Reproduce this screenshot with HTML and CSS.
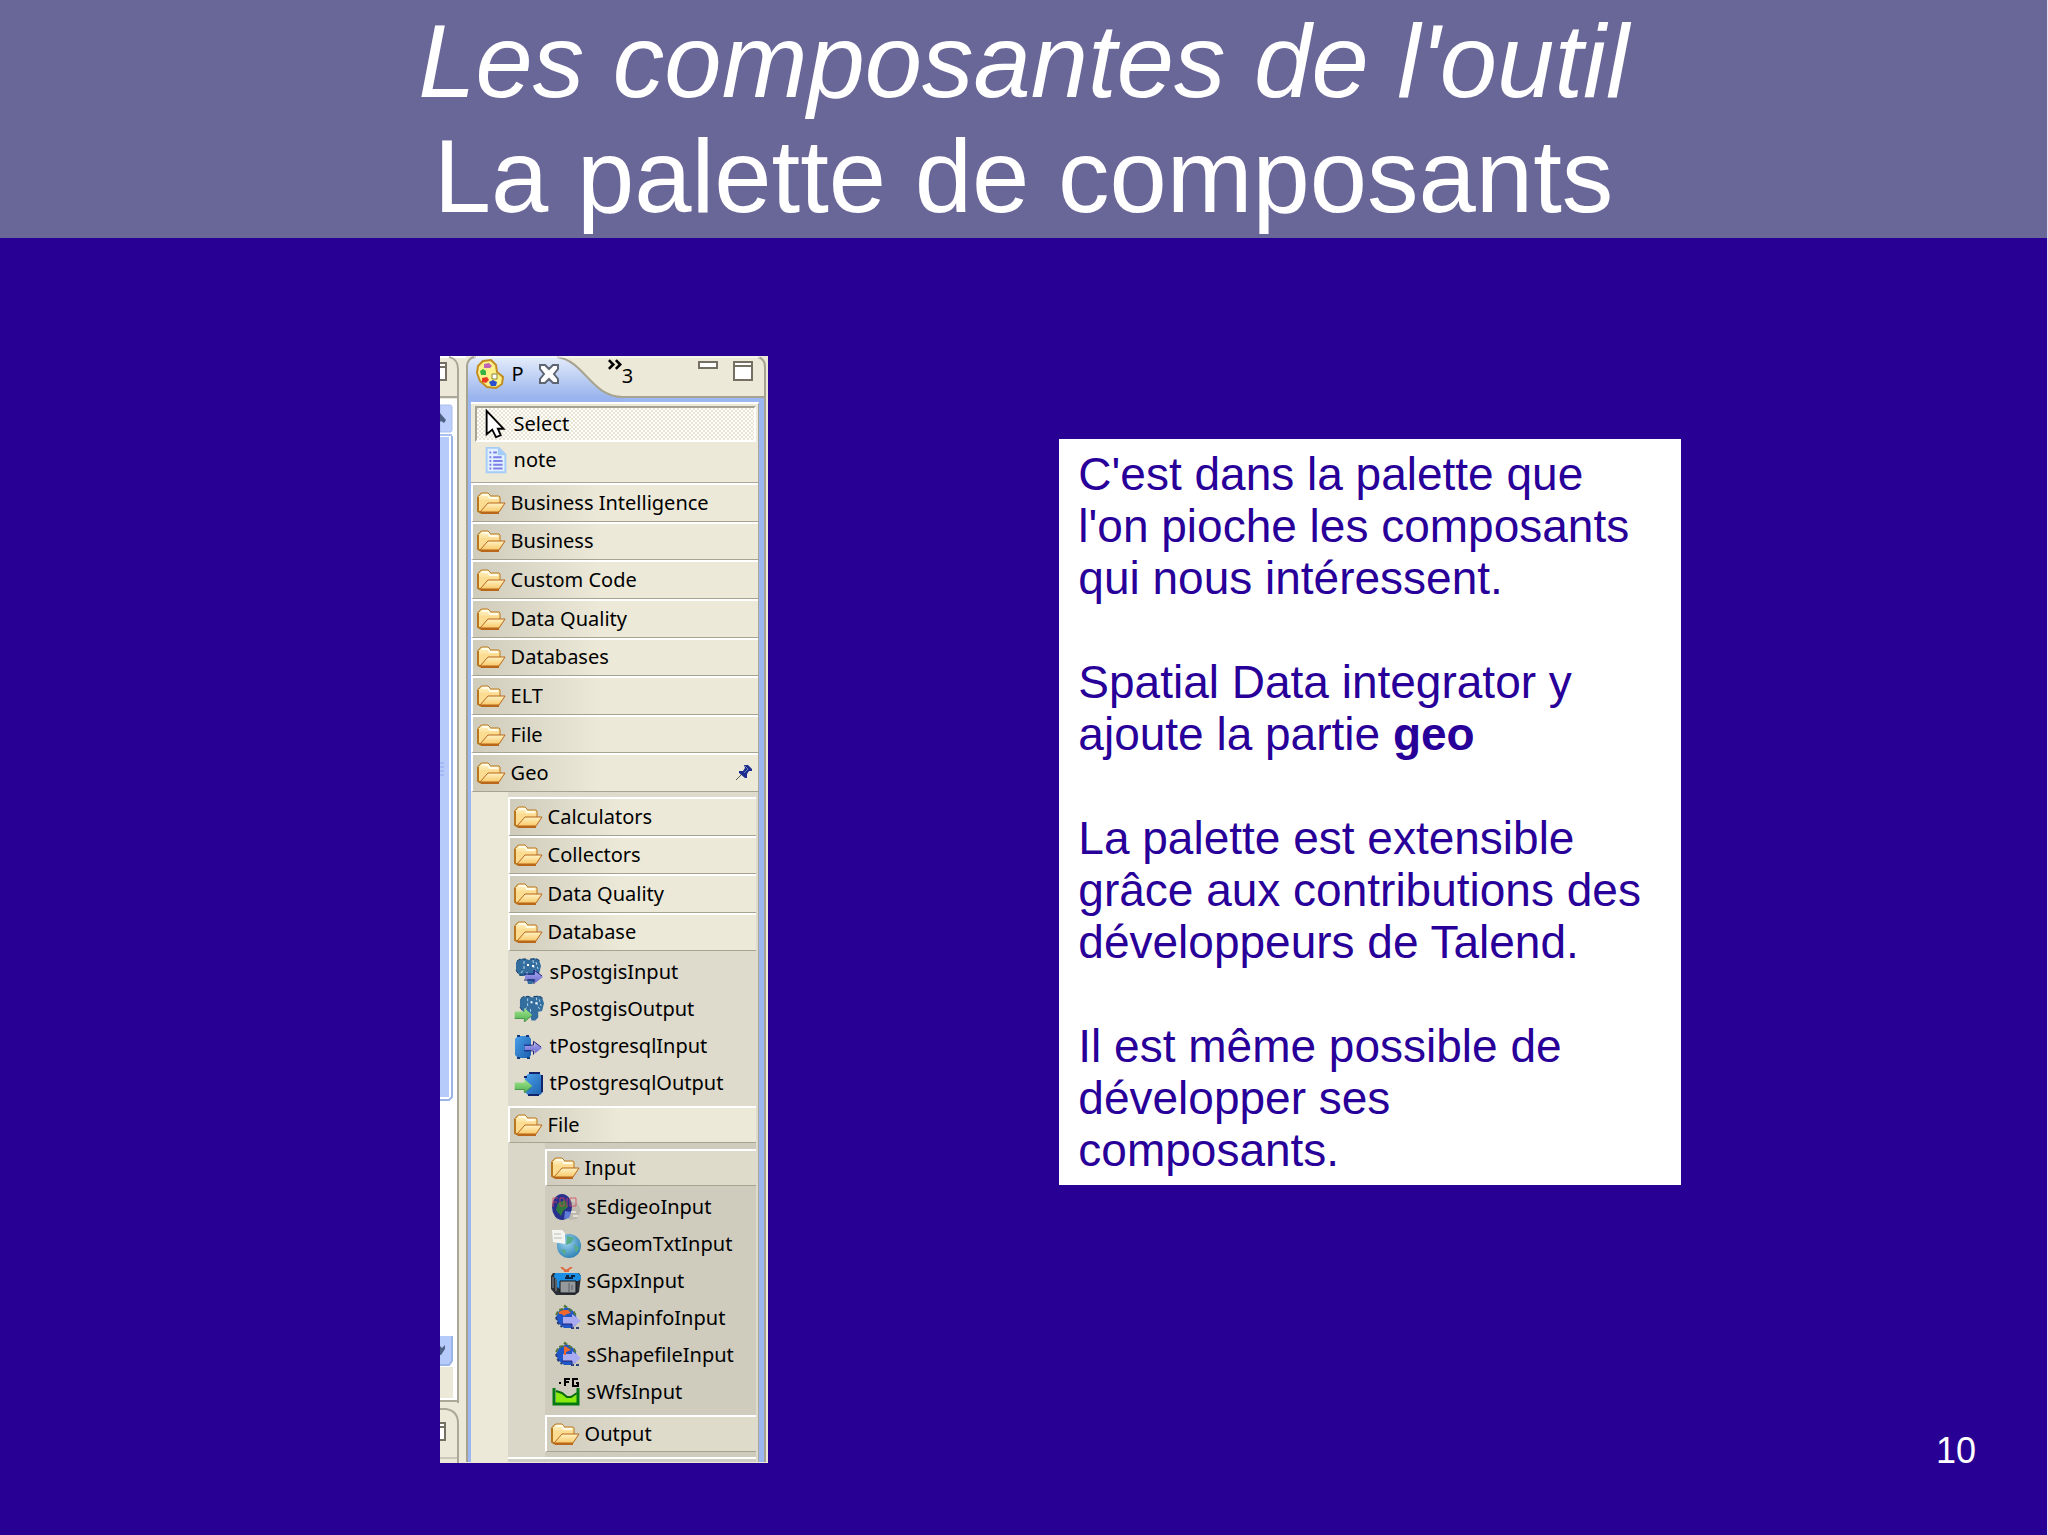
FILE: index.html
```html
<!DOCTYPE html>
<html lang="fr">
<head>
    <meta charset="UTF-8">
    <meta name="viewport" content="width=device-width, initial-scale=1.0">
    <title>La palette de composants</title>
    <link rel="stylesheet" href="styles.css">
</head>
<body>
    <!-- shared icons -->
    <svg class="sprite" aria-hidden="true">
        <linearGradient id="folderFill" x1="0" y1="0" x2="0" y2="1">
            <stop offset="0" stop-color="#fff3c4"/>
            <stop offset="1" stop-color="#f8c868"/>
        </linearGradient>
        <linearGradient id="dbFill" x1="0" y1="0" x2="1" y2="1">
            <stop offset="0" stop-color="#4aa0ea"/>
            <stop offset="1" stop-color="#1c5fae"/>
        </linearGradient>
        <linearGradient id="arrowIn" x1="0" y1="0" x2="0" y2="1">
            <stop offset="0" stop-color="#a9a8f0"/>
            <stop offset="1" stop-color="#6a68cc"/>
        </linearGradient>
        <linearGradient id="arrowOut" x1="0" y1="0" x2="0" y2="1">
            <stop offset="0" stop-color="#a6ea90"/>
            <stop offset="1" stop-color="#4fae50"/>
        </linearGradient>
        <radialGradient id="globeFill" cx="0.4" cy="0.35" r="0.7">
            <stop offset="0" stop-color="#9fd6ee"/>
            <stop offset="1" stop-color="#2b7fb4"/>
        </radialGradient>
        <symbol id="folder" viewBox="0 0 30 22">
            <path d="M1 18V4l2-1V2l2-1h6l2 2v1h9l1 1v6" fill="url(#folderFill)" stroke="#b9771f" stroke-width="1"/>
            <path d="M1 18V8h21v4L5 21H3z" fill="#fbdc90"/>
            <path d="M1 5v14l3 2" fill="none" stroke="#b9771f" stroke-width="2"/>
            <path d="M3 20l8-9h17l-6 9z" fill="url(#folderFill)" stroke="#b9671a" stroke-width="1"/>
            <path d="M4 21h18" stroke="#b9671a" stroke-width="2"/>
            <path d="M5 3h6l2 3h8" fill="none" stroke="#fffbe6" stroke-width="2"/>
        </symbol>
        <symbol id="arrowRight" viewBox="0 0 20 16">
            <path d="M1 6h10V2l8 6-8 6v-4H1z" fill="url(#arrowIn)"/>
            <path d="M0 5h10V1l8 6M0 11h10v4" fill="none" stroke="#1a1878" stroke-width="1"/>
        </symbol>
        <symbol id="arrowGreen" viewBox="0 0 20 16">
            <path d="M0 4h11V0l9 8-9 8v-4H0z" fill="url(#arrowOut)"/>
            <path d="M0 12h11v4l8-7" fill="none" stroke="#3d9146" stroke-width="1"/>
        </symbol>
        <symbol id="elephant" viewBox="0 0 26 26">
            <path d="M1 4l4-3h6l3 1 5-2 5 2 2 6-2 8-4 1v6l-3 3h-4l-2-8H5L1 12z" fill="#336e9f"/>
            <path d="M9 3v8l-3 4M18 2l1 8 3 5M12 14v9M21 4l2 7" fill="none" stroke="#b9d6ea" stroke-width="1" stroke-dasharray="3 2"/>
            <path d="M2 3l3-2h6M15 1h7l3 2M1 12l3 5h6" fill="none" stroke="#123a64" stroke-width="1" stroke-dasharray="4 2"/>
            <path d="M12 6h2v2h-2zM17 7h2v2h-2z" fill="#fff"/>
        </symbol>
        <symbol id="mapGlobe" viewBox="0 0 30 28">
            <path d="M8 7l4-2 3-2 5 2 4 4 2 6-1 6-4 3h-8l-6-5-2-6z" fill="#1f56c8"/>
            <path d="M5 11l3-5 4-1 2-3 4 3 5 3 2 4" fill="none" stroke="#53783a" stroke-width="2" stroke-dasharray="4 2"/>
            <path d="M5 13l2 6 4 4M20 24h8" fill="none" stroke="#27407a" stroke-width="2" stroke-dasharray="3 2"/>
            <path d="M12 13h9v-3l9 7-9 7v-4h-9z" fill="#a9aaf0"/>
            <path d="M11 20h10v4" fill="none" stroke="#25257c" stroke-width="1"/>
        </symbol>
    </svg>

    <div class="slide">
        <header class="title-band">
            <h1 class="title"><em>Les composantes de l'outil</em><br>La palette de composants</h1>
        </header>

        <main class="content">
            <section class="ide" aria-label="Palette">
                <!-- edge of the neighbouring editor and its scrollbar -->
                <svg class="editor-edge" viewBox="0 0 26 1107" preserveAspectRatio="none" aria-hidden="true">
                    <path d="M0 0h26v1107H0z" fill="#ece9d8"/>
                    <path d="M0 1h26" stroke="#fff" stroke-width="2"/>
                    <path d="M9 1q9 2 9 12v1034" fill="none" stroke="#aca899" stroke-width="2"/>
                    <path d="M0 7h6v17H0" fill="#fff" stroke="#767064" stroke-width="2"/>
                    <path d="M0 11h6" stroke="#767064" stroke-width="2"/>
                    <path d="M0 41h18" stroke="#aca899" stroke-width="2"/>
                    <path d="M0 43h17v1001H0z" fill="#fff"/>
                    <path d="M0 49h10q2 0 2 2v23q0 2-2 2H0z" fill="#bdcffa" stroke="#a8bff0" stroke-width="1"/>
                    <path d="M0 57l6 7-2 3-3-2-1 1" fill="#4d6185"/>
                    <path d="M0 79h12" stroke="#a8bff0" stroke-width="2"/>
                    <path d="M0 81h9v660H0z" fill="#b7cbfb"/>
                    <path d="M12 80v661l-3 3H0" fill="none" stroke="#9bb4e8" stroke-width="2"/>
                    <path d="M0 407h4M0 411h4M0 415h4M0 419h4" stroke="#8ea6f0" stroke-width="1"/>
                    <path d="M0 980h12v26q0 2-2 2H0z" fill="#b7cbfb"/>
                    <path d="M12 980v25l-3 4H0" fill="none" stroke="#9bb4e8" stroke-width="2"/>
                    <path d="M0 990l2 2 3-3v4l-4 6H0" fill="#4d6185"/>
                    <path d="M0 1011h13v31H0z" fill="#ece9d8"/>
                    <path d="M0 1045h18" stroke="#aca899" stroke-width="2"/>
                    <path d="M0 1053h6q12 2 12 14v40" fill="none" stroke="#aca899" stroke-width="2"/>
                    <path d="M0 1067h5v17H0" fill="#fff" stroke="#767064" stroke-width="2"/>
                    <path d="M0 1071h5" stroke="#767064" stroke-width="2"/>
                    <path d="M0 1102h18" stroke="#aca899" stroke-width="1"/>
                </svg>

                <div class="view">
                    <div class="tab-bar">
                        <svg class="tab-shape" viewBox="0 0 302 46" preserveAspectRatio="none" aria-hidden="true">
                            <linearGradient id="tabFill" x1="0" y1="0" x2="0" y2="1">
                                <stop offset="0" stop-color="#e4ecfa"/>
                                <stop offset="0.9" stop-color="#99b4ee"/>
                            </linearGradient>
                            <path d="M0 0h302v46H0z" fill="#ece9d8"/>
                            <path d="M1 46V10q1-9 9-9h80c28 4 34 40 66 40h143v5z" fill="url(#tabFill)"/>
                            <path d="M158 42h140v4H158z" fill="#9bb8f2"/>
                            <path d="M1 46V10q1-9 9-9M91 1c28 4 34 40 66 40h142M292 1q7 2 7 10v35" fill="none" stroke="#a7a391" stroke-width="2"/>
                            <path d="M8 1h286" stroke="#fff" stroke-width="1"/>
                        </svg>
                        <button class="tab" type="button">
                            <svg class="tab-icon" viewBox="0 0 30 30" aria-hidden="true">
                                <path d="M8 2l8-1 5 5 1 7 6 5-1 7-6 4-9-1-7-6-3-8 1-7z" fill="#fbf089" stroke="#c38d22" stroke-width="2"/>
                                <path d="M9 5l5-1 3 3-2 2H9z" fill="#c064b4"/>
                                <path d="M5 12l3-2 3 2v4H6z" fill="#35b344"/>
                                <path d="M7 19l5-1 2 3-3 3-4-1z" fill="#ea3a24"/>
                                <path d="M14 23l4-2 4 2-1 4h-5z" fill="#2a50d0"/>
                                <path d="M17 15h5v5h-5z" fill="#fff" stroke="#8b8432" stroke-width="1"/>
                            </svg>
                            <span>P</span>
                        </button>
                        <button class="icon-button" type="button" aria-label="Close">
                            <svg class="close-icon" viewBox="0 0 22 20" aria-hidden="true">
                                <path d="M2 1h5l4 4 4-4h5v4l-4 5 4 5v4h-5l-4-4-4 4H2v-4l4-5-4-5z" fill="#fff" stroke="#5d6672" stroke-width="2"/>
                            </svg>
                        </button>
                        <button class="more-tabs" type="button" aria-label="3 more views">
                            <svg class="chevrons" viewBox="0 0 16 12" aria-hidden="true">
                                <path d="M1 1l5 5-5 5M9 1l5 5-5 5" fill="none" stroke="#000" stroke-width="3"/>
                            </svg>
                            <span>3</span>
                        </button>
                        <div class="window-buttons">
                            <button class="icon-button" type="button" aria-label="Minimize">
                                <svg class="window-icon" viewBox="0 0 20 20" aria-hidden="true">
                                    <path d="M1 1h18v6H1z" fill="#fff" stroke="#767064" stroke-width="2"/>
                                </svg>
                            </button>
                            <button class="icon-button" type="button" aria-label="Maximize">
                                <svg class="window-icon" viewBox="0 0 20 20" aria-hidden="true">
                                    <path d="M1 1h18v18H1z" fill="#fff" stroke="#767064" stroke-width="2"/>
                                    <path d="M1 5h18" stroke="#767064" stroke-width="2"/>
                                </svg>
                            </button>
                        </div>
                    </div>

                    <div class="view-body">
                        <div class="palette">
                            <div class="tools">
                                <button class="tool selected" type="button">
                                    <svg class="tool-icon" viewBox="0 0 22 32" aria-hidden="true">
                                        <path d="M1 2v25l6-5 4 8 5-2-3-7h6z" fill="#fff" stroke="#000" stroke-width="2"/>
                                    </svg>
                                    Select
                                </button>
                                <button class="tool" type="button">
                                    <svg class="tool-icon" viewBox="0 0 22 32" aria-hidden="true">
                                        <path d="M1 3h13l7 7v19H1z" fill="#e3f0ff" stroke="#a3ccf8" stroke-width="2"/>
                                        <path d="M13 3v8h8" fill="#a3ccf8"/>
                                        <path d="M4 8h2M8 8h4M4 13h2M8 13h9M4 17h2M8 17h10M4 21h2M8 21h10M4 25h2M8 25h10" stroke="#7d80e8" stroke-width="2"/>
                                    </svg>
                                    note
                                </button>
                            </div>

                            <div class="categories">
                                <button class="drawer" type="button"><svg class="folder" aria-hidden="true"><use href="#folder"/></svg>Business Intelligence</button>
                                <button class="drawer" type="button"><svg class="folder" aria-hidden="true"><use href="#folder"/></svg>Business</button>
                                <button class="drawer" type="button"><svg class="folder" aria-hidden="true"><use href="#folder"/></svg>Custom Code</button>
                                <button class="drawer" type="button"><svg class="folder" aria-hidden="true"><use href="#folder"/></svg>Data Quality</button>
                                <button class="drawer" type="button"><svg class="folder" aria-hidden="true"><use href="#folder"/></svg>Databases</button>
                                <button class="drawer" type="button"><svg class="folder" aria-hidden="true"><use href="#folder"/></svg>ELT</button>
                                <button class="drawer" type="button"><svg class="folder" aria-hidden="true"><use href="#folder"/></svg>File</button>
                                <button class="drawer" type="button">
                                    <svg class="folder" aria-hidden="true"><use href="#folder"/></svg>Geo
                                    <svg class="pin" viewBox="0 0 16 16" aria-hidden="true">
                                        <path d="M0 15l5-5" stroke="#55564c" stroke-width="1"/>
                                        <path d="M8 0h4l4 4v2h-3l-2 3v4H9L3 8V6h4l2-3z" fill="#1d2c8e"/>
                                        <path d="M9 1l3 3-4 4" fill="none" stroke="#5f86b8" stroke-width="1"/>
                                    </svg>
                                </button>
                            </div>

                            <div class="level">
                                <div class="subcategories">
                                    <button class="drawer" type="button"><svg class="folder" aria-hidden="true"><use href="#folder"/></svg>Calculators</button>
                                    <button class="drawer" type="button"><svg class="folder" aria-hidden="true"><use href="#folder"/></svg>Collectors</button>
                                    <button class="drawer" type="button"><svg class="folder" aria-hidden="true"><use href="#folder"/></svg>Data Quality</button>
                                    <button class="drawer" type="button"><svg class="folder" aria-hidden="true"><use href="#folder"/></svg>Database</button>
                                </div>
                                <div class="components">
                                    <button class="component" type="button">
                                        <svg class="component-icon" viewBox="0 0 30 28" aria-hidden="true">
                                            <use href="#elephant" x="1" y="0" width="26" height="26"/>
                                            <use href="#arrowRight" x="10" y="11" width="20" height="16"/>
                                        </svg>
                                        sPostgisInput
                                    </button>
                                    <button class="component" type="button">
                                        <svg class="component-icon" viewBox="0 0 30 28" aria-hidden="true">
                                            <use href="#elephant" x="5" y="0" width="25" height="26"/>
                                            <use href="#arrowGreen" x="0" y="13" width="19" height="14"/>
                                        </svg>
                                        sPostgisOutput
                                    </button>
                                    <button class="component" type="button">
                                        <svg class="component-icon" viewBox="0 0 30 28" aria-hidden="true">
                                            <path d="M4 4h11l2 3v16l-2 3H4l-3-3V7z" fill="url(#dbFill)"/>
                                            <path d="M3 4h3M12 4h3M3 26h3M13 26h3" stroke="#12397c" stroke-width="2" fill="none"/>
                                            <use href="#arrowRight" x="10" y="8" width="19" height="16"/>
                                        </svg>
                                        tPostgresqlInput
                                    </button>
                                    <button class="component" type="button">
                                        <svg class="component-icon" viewBox="0 0 30 28" aria-hidden="true">
                                            <path d="M14 5h12l3 3v15l-3 3H14l-3-3V8z" fill="url(#dbFill)"/>
                                            <path d="M15 4h11M28 6v17M14 26h11M10 8h3" stroke="#12246c" stroke-width="2"/>
                                            <use href="#arrowGreen" x="0" y="10" width="19" height="14"/>
                                        </svg>
                                        tPostgresqlOutput
                                    </button>
                                </div>

                                <button class="drawer" type="button"><svg class="folder" aria-hidden="true"><use href="#folder"/></svg>File</button>
                                <div class="level">
                                    <button class="drawer" type="button"><svg class="folder" aria-hidden="true"><use href="#folder"/></svg>Input</button>
                                    <div class="components">
                                        <button class="component" type="button">
                                            <svg class="component-icon" viewBox="0 0 30 28" aria-hidden="true">
                                                <path d="M17 8l9 2 4 7-4 9-8 1-4-8z" fill="#bdb9ae"/>
                                                <ellipse cx="11" cy="14" rx="10" ry="13" fill="#27308e"/>
                                                <path d="M7 10l7-3 3 7-5 4-2 5-5-6z" fill="#2e7a3c"/>
                                                <path d="M14 18l6 1-2 6-5 1z" fill="#5c7cd8"/>
                                                <path d="M2 5v9M2 5h5M2 9h4M9 5h4v8H9zM16 5v9M19 5h6v8h-6z" fill="none" stroke="#d8455e" stroke-width="1" opacity="0.8"/>
                                                <path d="M20 19h5M22 23h5" stroke="#e2dfd4" stroke-width="2"/>
                                            </svg>
                                            sEdigeoInput
                                        </button>
                                        <button class="component" type="button">
                                            <svg class="component-icon" viewBox="0 0 30 28" aria-hidden="true">
                                                <circle cx="18" cy="16" r="12" fill="url(#globeFill)"/>
                                                <path d="M16 6l7 2-3 5-5 2zM10 19l5 1-1 6zM23 14l5 4-3 5z" fill="#58ac86"/>
                                                <path d="M1 0h10l3 3v11L2 12z" fill="#f4f4f0"/>
                                                <path d="M3 4h7M3 8h8" stroke="#bdbdb6" stroke-width="1"/>
                                            </svg>
                                            sGeomTxtInput
                                        </button>
                                        <button class="component" type="button">
                                            <svg class="component-icon" viewBox="0 0 30 28" aria-hidden="true">
                                                <path d="M2 6h26l2 3-2 16-4 3H5l-5-6V9z" fill="#2b2f35"/>
                                                <path d="M4 6h23l3 3v3l-3 2H11l-2 8-3-2V13l-3-3z" fill="#1c8fe4"/>
                                                <path d="M9 14h16v12H9z" fill="#96999c" stroke="#141619" stroke-width="1"/>
                                                <path d="M15 9h3M20 9h4M14 11h8" stroke="#0b2340" stroke-width="2"/>
                                                <path d="M2 10v11M5 12v12" stroke="#8b9197" stroke-width="1"/>
                                                <path d="M18 16v9M21 18v5" stroke="#5b5f66" stroke-width="1"/>
                                                <path d="M10 0l5 4 6-4M13 4h5" fill="none" stroke="#e06a3c" stroke-width="2"/>
                                            </svg>
                                            sGpxInput
                                        </button>
                                        <button class="component" type="button">
                                            <svg class="component-icon" viewBox="0 0 30 28" aria-hidden="true">
                                                <use href="#mapGlobe"/>
                                                <path d="M8 8l4-2h5l3 3-4 1-3 2-2-2H8z" fill="#f0682c"/>
                                            </svg>
                                            sMapinfoInput
                                        </button>
                                        <button class="component" type="button">
                                            <svg class="component-icon" viewBox="0 0 30 28" aria-hidden="true">
                                                <use href="#mapGlobe"/>
                                                <path d="M14 5l6 4-5 2v3h-2V6z" fill="#f0682c"/>
                                            </svg>
                                            sShapefileInput
                                        </button>
                                        <button class="component" type="button">
                                            <svg class="component-icon" viewBox="0 0 30 28" aria-hidden="true">
                                                <path d="M5 13l6 2 5 3 3 2 3-2 5-2v9H5z" fill="#8bea10"/>
                                                <path d="M5 13l6 2 5 4h4l6-4" fill="none" stroke="#0a6a10" stroke-width="2"/>
                                                <path d="M3 10v16h24V10" fill="none" stroke="#047a12" stroke-width="3"/>
                                                <path d="M8 5h2M14 8V1h5M14 4h4M27 1h-5v7h5V5h-2" fill="none" stroke="#000" stroke-width="2"/>
                                            </svg>
                                            sWfsInput
                                        </button>
                                    </div>
                                    <button class="drawer" type="button"><svg class="folder" aria-hidden="true"><use href="#folder"/></svg>Output</button>
                                </div>
                                <div class="next-drawer"></div>
                            </div>
                        </div>
                    </div>
                </div>
            </section>

            <section class="notes">
                <p>C'est dans la palette que l'on pioche les composants qui nous intéressent.</p>
                <p>Spatial Data integrator y ajoute la partie <strong>geo</strong></p>
                <p>La palette est extensible grâce aux contributions des développeurs de Talend.</p>
                <p>Il est même possible de développer ses composants.</p>
            </section>

            <div class="page-number">10</div>
        </main>
    </div>
</body>
</html>
```

FILE: styles.css
```css
* {
    box-sizing: border-box;
}
body {
    margin: 0;
    background: #280094;
    color: #fff;
    font-family: "Liberation Sans", Arial, sans-serif;
}
.sprite {
    position: absolute;
    width: 0;
    height: 0;
}
.slide {
    display: flex;
    flex-direction: column;
    min-height: 100vh;
    border-right: 1px solid #e4e0f2;
}

/* title */
.title-band {
    background: #696698;
    padding: 4px 0;
    text-align: center;
}
.title {
    margin: 0;
    font-size: 103px;
    font-weight: normal;
    line-height: 115px;
}

.content {
    flex: 1;
    display: grid;
    grid-template-columns: 440fr 328px 292fr 622px 366fr;
    align-items: start;
}

/* IDE palette */
.ide {
    grid-column: 2;
    margin-top: 118px;
    display: flex;
    background: #ece9d8;
    color: #000;
    font-family: "Noto Sans", "Open Sans", sans-serif;
    font-size: 20px;
}
.ide button {
    display: flex;
    align-items: center;
    width: 100%;
    margin: 0;
    padding: 0;
    border: 0;
    background: none;
    color: inherit;
    font: inherit;
    line-height: 24px;
    text-align: left;
    cursor: pointer;
}
.ide svg {
    flex: none;
    display: block;
}
.editor-edge {
    width: 26px;
    align-self: stretch;
    height: auto;
}
.view {
    flex: 1;
}
.tab-bar {
    position: relative;
    display: flex;
    align-items: flex-start;
    height: 46px;
    padding: 3px 15px 0 9px;
}
.tab-shape {
    position: absolute;
    top: 0;
    left: 0;
    width: 100%;
    height: 100%;
}
.tab-bar button {
    position: relative;
    width: auto;
}
.tab-bar .tab {
    gap: 7px;
    margin-right: 14px;
}
.tab-icon {
    width: 30px;
    height: 30px;
}
.tab-bar .icon-button {
    padding-top: 5px;
}
.close-icon {
    width: 22px;
    height: 20px;
}
.tab-bar .more-tabs {
    align-items: flex-start;
    margin-left: 48px;
}
.more-tabs span {
    padding-top: 5px;
}
.chevrons {
    width: 14px;
    height: 11px;
}
.window-buttons {
    display: flex;
    gap: 15px;
    margin-left: auto;
}
.tab-bar .window-buttons .icon-button {
    padding-top: 2px;
}
.window-icon {
    width: 20px;
    height: 20px;
}
.view-body {
    margin-right: 2px;
    padding: 0 5px 0 3px;
    border: solid #a7a391;
    border-width: 0 2px;
    background: #9bb8f2;
}
.palette {
    border-top: 2px solid #fff;
    border-right: 1px solid #aca899;
}
.tools {
    padding: 2px 2px 5px 4px;
    border-bottom: 1px solid #aca899;
    background: #ece9d8;
}
.ide .tool {
    height: 36px;
    gap: 7px;
    padding-left: 8px;
    border: 2px solid transparent;
}
.ide .tool + .tool {
    height: 35px;
}
.ide .tool.selected {
    border-color: #a7a391 #fff #fff #a7a391;
    background: repeating-conic-gradient(#fffefa 0 25%, #e8e5d6 0 50%) 0 0 / 4px 4px;
}
.tool-icon {
    width: 22px;
    height: 30px;
}

.categories {
    display: grid;
    grid-auto-rows: 1fr;
    height: 309px;
}
.ide .drawer {
    min-height: 37px;
    gap: 4px;
    padding: 0 6px 0 4px;
    border: solid #fff;
    border-width: 2px 0 1px 2px;
    border-bottom-color: #a7a391;
    background: linear-gradient(to right, #cfccbb, #ece9d8 45%);
}
.categories .drawer,
.subcategories .drawer {
    min-height: 0;
}
.folder {
    width: 30px;
    height: 22px;
}
.pin {
    width: 16px;
    height: 16px;
    margin-left: auto;
}

/* drawer content, one step darker at each level */
.level {
    padding: 5px 2px 0 37px;
    background: linear-gradient(to right, #ece9d8 37px, #dedacc 37px);
}
.level .level {
    padding: 6px 0 5px 37px;
    background: linear-gradient(to right, #dad7c9 37px, #cfccbe 37px);
}
.level .level .drawer {
    background: linear-gradient(to right, #d0cdbf, #dedbcb 45%);
}
.subcategories {
    display: grid;
    grid-auto-rows: 1fr;
    height: 154px;
}
.components {
    display: grid;
    grid-auto-rows: 37px;
    padding: 2px 0 5px;
}
.ide .component {
    gap: 6px;
    padding-left: 6px;
}
.component-icon {
    width: 30px;
    height: 28px;
}
.next-drawer {
    height: 5px;
    border-top: 2px solid #fff;
    background: #d0cdc4;
}

/* text panel */
.notes {
    grid-column: 4;
    margin-top: 201px;
    padding: 9px 28px 9px 19px;
    background: #fff;
    color: #280099;
    font-size: 46px;
    line-height: 52px;
}
.notes p {
    margin: 0 0 52px;
}
.notes p:last-child {
    margin-bottom: 0;
}

.page-number {
    grid-column: 5;
    align-self: end;
    justify-self: end;
    padding: 0 71px 64px 0;
    font-size: 36px;
    line-height: 40px;
}
```
